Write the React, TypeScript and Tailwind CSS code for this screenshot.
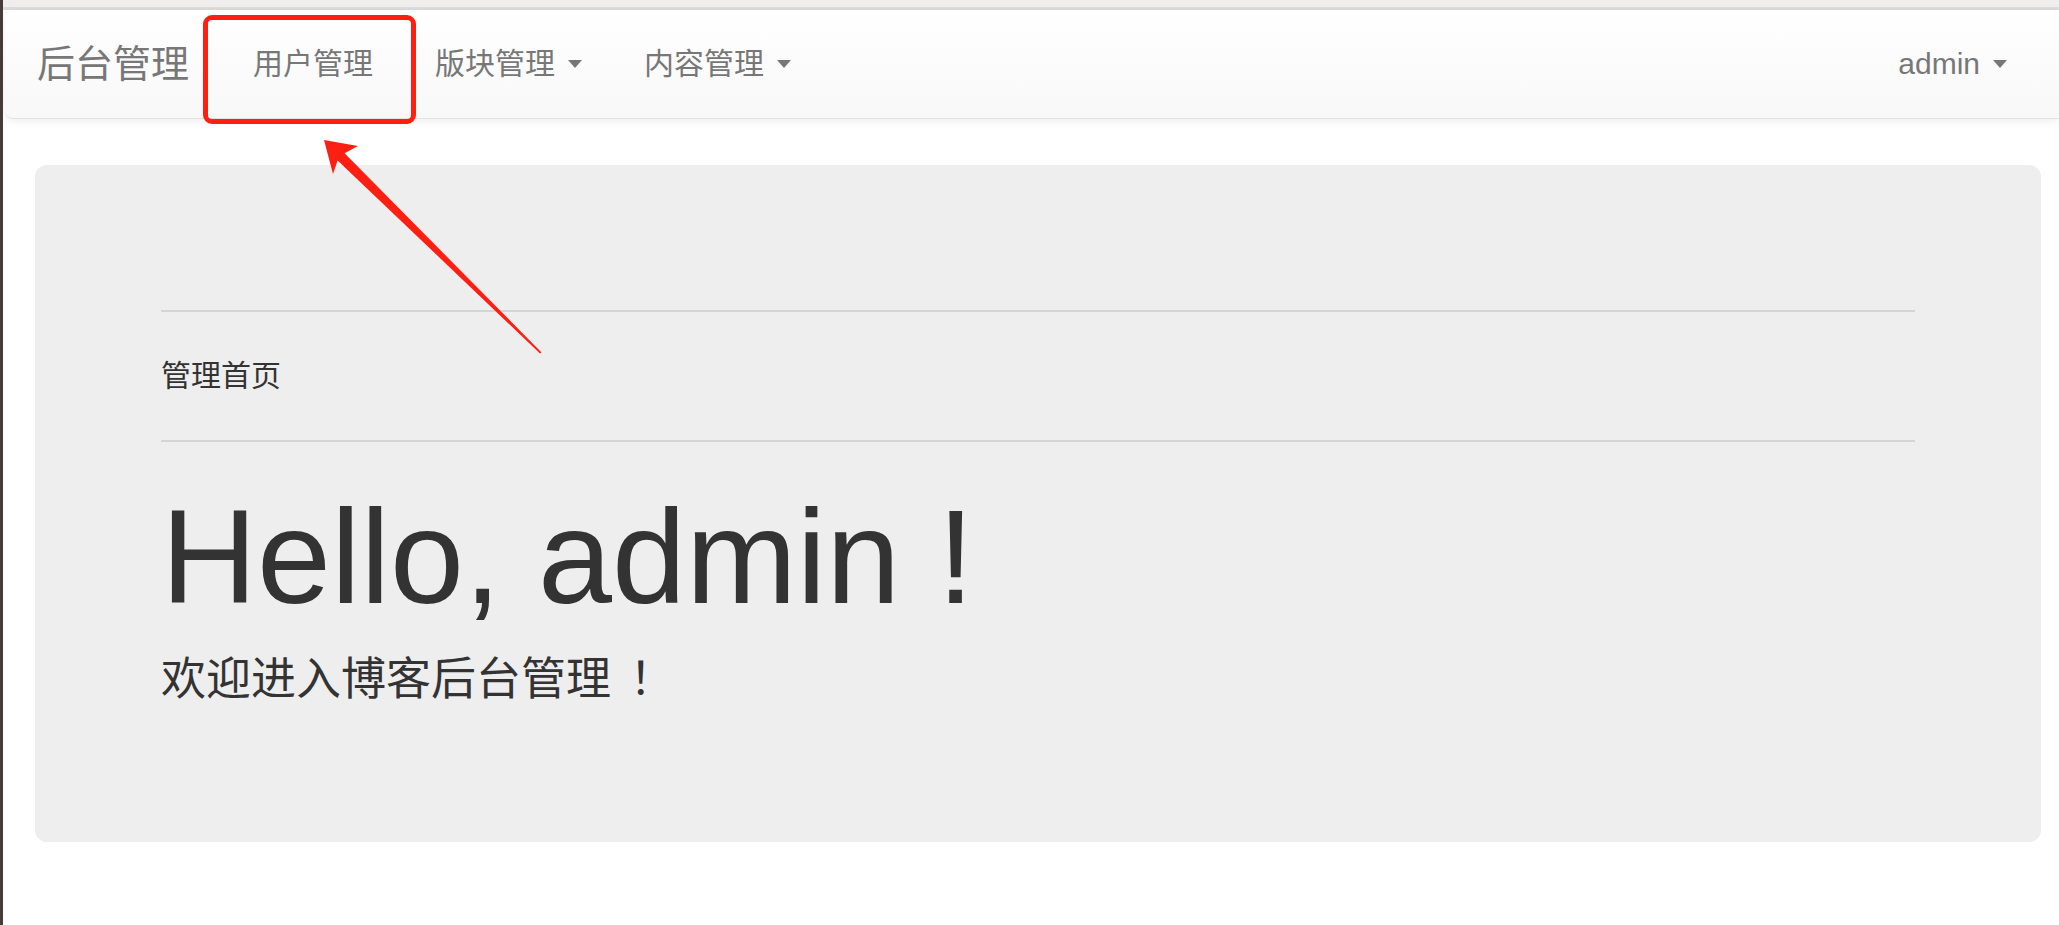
import React from 'react';

const font = "font-['Liberation_Sans','Noto_Sans_CJK_SC',sans-serif]";

function Caret() {
  return (
    <span className="ml-[13px] inline-block h-0 w-0 border-x-[7.5px] border-t-[8px] border-x-transparent border-t-[#777777]" />
  );
}

function NavItem({ label, dropdown }: { label: string; dropdown?: boolean }) {
  return (
    <div className="flex h-full items-center px-[31px] text-[30px] leading-none text-[#777777]">
      <span>{label}</span>
      {dropdown && <Caret />}
    </div>
  );
}

export default function App() {
  return (
    <div className={`relative flex h-[925px] w-full overflow-hidden bg-white ${font}`}>
      <div className="w-[3px] shrink-0 bg-[#4a3b3b]" />

      <div className="flex min-w-0 flex-1 flex-col">
        <div className="h-[7px] bg-[#efeeed]" />
        <div className="h-[3px] bg-[#dcdcdc]" />

        {/* navbar */}
        <div className="ml-[2px] flex h-[109px] items-center rounded-l-[8px] border-b border-[#e2e2e2] bg-gradient-to-b from-white to-[#f8f8f8] shadow-[0_2px_8px_rgba(0,0,0,0.07)]">
          <div className="flex h-full items-center pl-[32px] pr-[33px] text-[38px] leading-none text-[#777777]">
            后台管理
          </div>
          <NavItem label="用户管理" />
          <NavItem label="版块管理" dropdown />
          <NavItem label="内容管理" dropdown />
          <div className="ml-auto flex h-full items-center pr-[21px]">
            <NavItem label="admin" dropdown />
          </div>
        </div>

        {/* jumbotron */}
        <div className="ml-[32px] mr-[18px] mt-[46px] h-[677px] rounded-[12px] bg-[#eeeeee] px-[126px] pt-[145px] text-[#333333]">
          <div className="h-[2px] bg-[#d5d5d5]" />
          <div className="flex h-[128px] items-center text-[30px] leading-none">管理首页</div>
          <div className="h-[2px] bg-[#d5d5d5]" />
          <h1 className="mt-[49px] text-[133px] leading-none">Hello, admin !</h1>
          <p className="mt-[33px] text-[45px] leading-none">
            欢迎进入博客后台管理 <span className="ml-[6px]">！</span>
          </p>
        </div>
      </div>

      {/* red annotation */}
      <div className="pointer-events-none absolute left-[203px] top-[15px] h-[109px] w-[213px] rounded-[9px] border-[5px] border-[#fe1f13]" />
      <svg className="pointer-events-none absolute left-0 top-0" width="2059" height="925" viewBox="0 0 2059 925">
        <polygon
          points="324,140 358,146 344.6,153.2 541.5,352.5 540,353.5 337.6,160.4 333,174"
          fill="#fe1f13"
        />
      </svg>
    </div>
  );
}
